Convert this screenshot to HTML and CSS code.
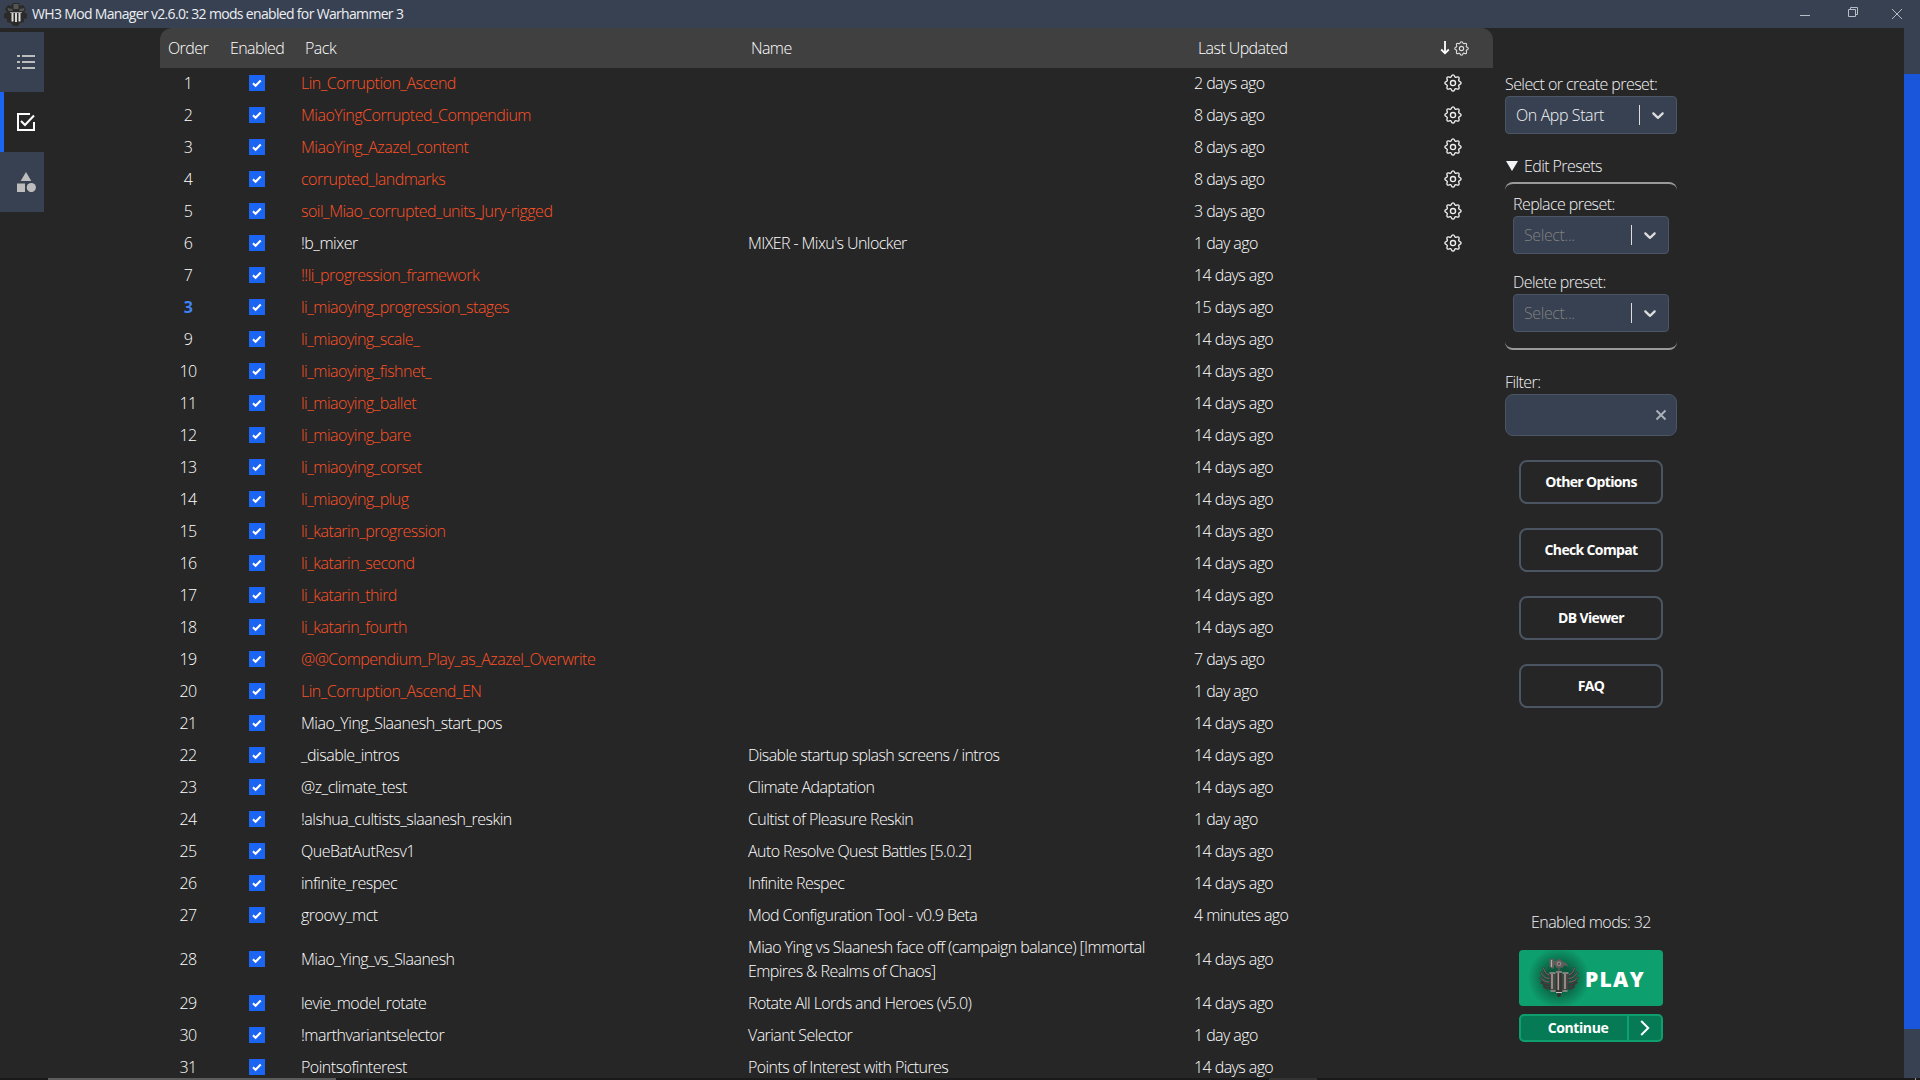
FILE: index.html
```html
<!DOCTYPE html>
<html lang="en">
<head>
<meta charset="utf-8">
<title>WH3 Mod Manager</title>
<link rel="stylesheet" href="styles.css">
</head>
<body>
<svg class="defs" aria-hidden="true">
  <symbol id="gear" viewBox="0 0 24 24"><path fill="none" stroke="currentColor" stroke-width="1.8" stroke-linejoin="round" d="M12 1.200C13.600 1.200 13.700 2.200 14.200 3.300C14.700 4.400 15.700 4.700 16.800 4.200C18 3.700 18.700 3.300 19.700 4.300C20.700 5.300 20.300 6 19.800 7.200C19.300 8.300 19.600 9.300 20.700 9.800C21.800 10.300 22.800 10.400 22.800 12C22.800 13.600 21.800 13.700 20.700 14.200C19.600 14.700 19.300 15.700 19.800 16.800C20.300 18 20.700 18.700 19.700 19.700C18.700 20.700 18 20.300 16.800 19.800C15.700 19.300 14.700 19.600 14.200 20.700C13.700 21.800 13.600 22.800 12 22.800C10.400 22.800 10.300 21.800 9.800 20.700C9.300 19.600 8.300 19.300 7.200 19.800C6 20.300 5.300 20.700 4.300 19.700C3.300 18.700 3.700 18 4.200 16.800C4.700 15.700 4.400 14.700 3.300 14.200C2.200 13.700 1.200 13.600 1.200 12C1.200 10.400 2.200 10.300 3.300 9.800C4.400 9.300 4.700 8.300 4.200 7.200C3.700 6 3.300 5.300 4.300 4.300C5.300 3.300 6 3.700 7.200 4.200C8.300 4.700 9.300 4.400 9.800 3.300C10.300 2.200 10.400 1.200 12 1.200z"/><circle cx="12" cy="12" r="3.400" fill="none" stroke="currentColor" stroke-width="1.800"/></symbol>
  <symbol id="tick" viewBox="0 0 16 16"><path d="M4 8.300l2.600 2.500 5.100-5.300" fill="none" stroke="#fff" stroke-width="2.100"/></symbol>
  <symbol id="chevron" viewBox="0 0 20 20"><path fill="currentColor" d="M4.516 7.548c.436-.446 1.043-.481 1.576 0L10 11.295l3.908-3.747c.533-.481 1.141-.446 1.574 0 .436.445.408 1.197 0 1.615-.406.418-4.695 4.502-4.695 4.502a1.095 1.095 0 0 1-1.576 0S4.924 9.581 4.516 9.163s-.436-1.170 0-1.615z"/></symbol>
  <symbol id="emblem" viewBox="0 0 40 40">
    <g fill="none" stroke="#3d3838" stroke-width="2.200" stroke-linecap="round"><path d="M11 18C7 17 5 13 4.500 10M11 21C6 21 4 18 2 15M11 24C6 25 3 22 1.500 20M11 27C7 28 4 26 2.500 24.500M11 30C8 31 6 30 5 28.500M29 18c4-1 6-5 6.500-8M29 21c5 0 7-3 9-6M29 24c5 1 8-2 9.500-4M29 27c4 1 7-1 8.500-2.500M29 30c3 1 5 0 6-1.500"/></g>
    <g fill="none" stroke="#8a8582" stroke-width=".7" stroke-linecap="round"><path d="M10 17C7 16 5 13 4.500 10M10 20.500C6 20.500 4 18 2 15M10 24C6 24 3 22 1.500 20M30 17c3-1 5-4 5.500-7M30 20.500c4 0 6-2.500 8-5.500M30 24c4 0 7-2 8.500-4"/></g>
    <path stroke="#555050" stroke-width="2.500" d="M20 9v6"/>
    <path fill="#4b4341" d="M10.500 14.500h6V34h-3l-2-2.500zM23.500 14.500h6l-1 17-2 2.500h-3z"/>
    <path fill="#3c3030" d="M17.200 13.500h5.600V35h-5.600z"/>
    <path stroke="#a39e9b" stroke-width="1.600" d="M13 16v15M19.300 15v17M26 16v15"/>
    <path stroke="#c4bfbb" stroke-width="1.200" d="M10.500 15h6M17 14h6M23.500 15h6M11.500 33h5M17 34.500h6M23.500 33h5"/>
    <circle cx="20" cy="37" r="2" fill="#38302f"/>
    <path fill="#625d5b" d="M10.500 1h4.500v2h2c1-2 4.500-2.500 6 0l1.500 1.200 2.500.5 2.500 4-4-1.500-2 2.500h-6l-2-3H15v3.500c-2.500 1-4-.5-4.500-2z"/>
    <path stroke="#b3aeaa" stroke-width="1.200" d="M12.500 2v7"/>
    <circle cx="20" cy="5.800" r="2.300" fill="#8f8a87"/><circle cx="20" cy="5.800" r=".9" fill="#333"/>
  </symbol>
</svg>
<div class="app">
  <header class="titlebar">
    <svg class="logo" viewBox="0 0 24 24"><path fill="#2b2a29" d="M9 1l6 0 1 3 3-1 3 4-2 3 3 2v4l-3 1 0 3-4 1-2 3h-5l-2-3-4-1 0-3-3-1v-4l3-2-2-3 3-4 3 1z"/><path fill="#555" d="M9.500 2h5v5h-5zM3.500 6l5 1v2h-4zM20.500 6l-5 1v2h4z"/><path stroke="#d8d8d8" stroke-width="2" d="M8.500 10.500v9M12 10.500v9.500M15.500 10.500v9"/><path stroke="#999" d="M6 10.500h12"/></svg>
    <span class="app-title">WH3 Mod Manager v2.6.0: 32 mods enabled for Warhammer 3</span>
    <div class="window-controls">
      <svg viewBox="0 0 12 12"><path d="M1 6.500h10"/></svg>
      <svg viewBox="0 0 12 12"><path d="M1.500 3.500h7v7h-7zM3.500 3.500v-2h7v7h-2"/></svg>
      <svg viewBox="0 0 12 12"><path d="M1 1l10 10M11 1L1 11"/></svg>
    </div>
  </header>
  <div class="body">
    <nav class="tabs">
      <a class="tab"><svg width="20" height="20" viewBox="0 0 20 20"><path fill="currentColor" d="M1 3h3v2H1zm0 6h3v2H1zm0 6h3v2H1zM6 3h13v2H6zm0 6h13v2H6zm0 6h13v2H6z"/></svg></a>
      <a class="tab active"><svg width="20" height="20" viewBox="0 0 20 20"><path fill="none" stroke="currentColor" stroke-width="2" d="M14 2H2v16h16v-8M5 9l4 4 9-9.500"/></svg></a>
      <a class="tab"><svg width="20" height="20" viewBox="0 0 20 20"><path fill="currentColor" d="M10 0l5.300 9H4.700zM1 11.500h8V20H1z"/><circle cx="15.300" cy="15.500" r="4.600" fill="currentColor"/></svg></a>
    </nav>
    <main class="mods">
      <div class="row head"><span>Order</span><span>Enabled</span><span>Pack</span><span>Name</span><span>Last Updated</span><span class="sort"><svg class="arrow" viewBox="0 0 10 14"><path d="M5 0v12M1.200 8.500L5 12.300l3.800-3.800" fill="none" stroke="currentColor" stroke-width="1.800"/></svg><svg class="gear"><use href="#gear"/></svg></span></div>
      <div class="row local"><span>1</span><i class="check"><svg><use href="#tick"/></svg></i><span>Lin_Corruption_Ascend</span><span></span><span>2 days ago</span><svg class="gear"><use href="#gear"/></svg></div>
      <div class="row local"><span>2</span><i class="check"><svg><use href="#tick"/></svg></i><span>MiaoYingCorrupted_Compendium</span><span></span><span>8 days ago</span><svg class="gear"><use href="#gear"/></svg></div>
      <div class="row local"><span>3</span><i class="check"><svg><use href="#tick"/></svg></i><span>MiaoYing_Azazel_content</span><span></span><span>8 days ago</span><svg class="gear"><use href="#gear"/></svg></div>
      <div class="row local"><span>4</span><i class="check"><svg><use href="#tick"/></svg></i><span>corrupted_landmarks</span><span></span><span>8 days ago</span><svg class="gear"><use href="#gear"/></svg></div>
      <div class="row local"><span>5</span><i class="check"><svg><use href="#tick"/></svg></i><span>soil_Miao_corrupted_units_Jury-rigged</span><span></span><span>3 days ago</span><svg class="gear"><use href="#gear"/></svg></div>
      <div class="row"><span>6</span><i class="check"><svg><use href="#tick"/></svg></i><span>!b_mixer</span><span>MIXER - Mixu's Unlocker</span><span>1 day ago</span><svg class="gear"><use href="#gear"/></svg></div>
      <div class="row local"><span>7</span><i class="check"><svg><use href="#tick"/></svg></i><span>!!li_progression_framework</span><span></span><span>14 days ago</span></div>
      <div class="row local pinned"><span>3</span><i class="check"><svg><use href="#tick"/></svg></i><span>li_miaoying_progression_stages</span><span></span><span>15 days ago</span></div>
      <div class="row local"><span>9</span><i class="check"><svg><use href="#tick"/></svg></i><span>li_miaoying_scale_</span><span></span><span>14 days ago</span></div>
      <div class="row local"><span>10</span><i class="check"><svg><use href="#tick"/></svg></i><span>li_miaoying_fishnet_</span><span></span><span>14 days ago</span></div>
      <div class="row local"><span>11</span><i class="check"><svg><use href="#tick"/></svg></i><span>li_miaoying_ballet</span><span></span><span>14 days ago</span></div>
      <div class="row local"><span>12</span><i class="check"><svg><use href="#tick"/></svg></i><span>li_miaoying_bare</span><span></span><span>14 days ago</span></div>
      <div class="row local"><span>13</span><i class="check"><svg><use href="#tick"/></svg></i><span>li_miaoying_corset</span><span></span><span>14 days ago</span></div>
      <div class="row local"><span>14</span><i class="check"><svg><use href="#tick"/></svg></i><span>li_miaoying_plug</span><span></span><span>14 days ago</span></div>
      <div class="row local"><span>15</span><i class="check"><svg><use href="#tick"/></svg></i><span>li_katarin_progression</span><span></span><span>14 days ago</span></div>
      <div class="row local"><span>16</span><i class="check"><svg><use href="#tick"/></svg></i><span>li_katarin_second</span><span></span><span>14 days ago</span></div>
      <div class="row local"><span>17</span><i class="check"><svg><use href="#tick"/></svg></i><span>li_katarin_third</span><span></span><span>14 days ago</span></div>
      <div class="row local"><span>18</span><i class="check"><svg><use href="#tick"/></svg></i><span>li_katarin_fourth</span><span></span><span>14 days ago</span></div>
      <div class="row local"><span>19</span><i class="check"><svg><use href="#tick"/></svg></i><span>@@Compendium_Play_as_Azazel_Overwrite</span><span></span><span>7 days ago</span></div>
      <div class="row local"><span>20</span><i class="check"><svg><use href="#tick"/></svg></i><span>Lin_Corruption_Ascend_EN</span><span></span><span>1 day ago</span></div>
      <div class="row"><span>21</span><i class="check"><svg><use href="#tick"/></svg></i><span>Miao_Ying_Slaanesh_start_pos</span><span></span><span>14 days ago</span></div>
      <div class="row"><span>22</span><i class="check"><svg><use href="#tick"/></svg></i><span>_disable_intros</span><span>Disable startup splash screens / intros</span><span>14 days ago</span></div>
      <div class="row"><span>23</span><i class="check"><svg><use href="#tick"/></svg></i><span>@z_climate_test</span><span>Climate Adaptation</span><span>14 days ago</span></div>
      <div class="row"><span>24</span><i class="check"><svg><use href="#tick"/></svg></i><span>!alshua_cultists_slaanesh_reskin</span><span>Cultist of Pleasure Reskin</span><span>1 day ago</span></div>
      <div class="row"><span>25</span><i class="check"><svg><use href="#tick"/></svg></i><span>QueBatAutResv1</span><span>Auto Resolve Quest Battles [5.0.2]</span><span>14 days ago</span></div>
      <div class="row"><span>26</span><i class="check"><svg><use href="#tick"/></svg></i><span>infinite_respec</span><span>Infinite Respec</span><span>14 days ago</span></div>
      <div class="row"><span>27</span><i class="check"><svg><use href="#tick"/></svg></i><span>groovy_mct</span><span>Mod Configuration Tool - v0.9 Beta</span><span>4 minutes ago</span></div>
      <div class="row"><span>28</span><i class="check"><svg><use href="#tick"/></svg></i><span>Miao_Ying_vs_Slaanesh</span><span>Miao Ying vs Slaanesh face off (campaign balance) [Immortal Empires &amp; Realms of Chaos]</span><span>14 days ago</span></div>
      <div class="row"><span>29</span><i class="check"><svg><use href="#tick"/></svg></i><span>levie_model_rotate</span><span>Rotate All Lords and Heroes (v5.0)</span><span>14 days ago</span></div>
      <div class="row"><span>30</span><i class="check"><svg><use href="#tick"/></svg></i><span>!marthvariantselector</span><span>Variant Selector</span><span>1 day ago</span></div>
      <div class="row"><span>31</span><i class="check"><svg><use href="#tick"/></svg></i><span>Pointsofinterest</span><span>Points of Interest with Pictures</span><span>14 days ago</span></div>
    </main>
    <aside class="sidebar">
      <label>Select or create preset:</label>
      <div class="select"><span>On App Start</span><b></b><svg><use href="#chevron"/></svg></div>
      <div class="summary"><i></i>Edit Presets</div>
      <div class="edit-panel">
        <label>Replace preset:</label>
        <div class="select empty"><span>Select...</span><b></b><svg><use href="#chevron"/></svg></div>
        <label class="second">Delete preset:</label>
        <div class="select empty"><span>Select...</span><b></b><svg><use href="#chevron"/></svg></div>
      </div>
      <label>Filter:</label>
      <div class="filter"><svg viewBox="0 0 12 12"><path d="M1.500 1.500l9 9M10.500 1.500l-9 9" stroke="currentColor" stroke-width="2"/></svg></div>
      <div class="actions">
        <button>Other Options</button>
        <button>Check Compat</button>
        <button>DB Viewer</button>
        <button>FAQ</button>
      </div>
      <div class="launch">
        <p>Enabled mods: 32</p>
        <button class="play"><svg><use href="#emblem"/></svg><span>PLAY</span></button>
        <button class="continue"><span>Continue</span><i><svg viewBox="0 0 10 16"><path d="M1.200 1l7 7-7 7" fill="none" stroke="#fff" stroke-width="2"/></svg></i></button>
      </div>
    </aside>
    <div class="scrollbar"><i></i></div>
  </div>
  <footer class="desk-edge"><i class="window"></i><i class="item"></i><i class="peek"></i></footer>
</div>
</body>
</html>
```
FILE: styles.css
```css
* { box-sizing: border-box; }
body {
  margin: 0;
  background: #262626;
  color: #fff;
  font: 330 16px/24px "Open Sans", "Noto Sans", sans-serif;
  letter-spacing: -0.58px;
  overflow: hidden;
}
.defs { display: none; }
.app { display: flex; flex-direction: column; height: 1080px; overflow: hidden; }

.titlebar { display: flex; align-items: center; height: 28px; flex: none; padding: 0 7px 0 4px; background: #374151; }
.logo { width: 24px; height: 24px; }
.app-title { margin-left: 4px; font-size: 14px; font-weight: 400; line-height: 28px; color: #eceef1; letter-spacing: -0.67px; }
.window-controls { display: flex; gap: 34px; margin-left: auto; padding-right: 10px; }
.window-controls svg { width: 12px; height: 12px; overflow: visible; fill: none; stroke: #b8bdc5; stroke-width: 1; }
.window-controls svg:nth-child(1) { margin: 1px -2px 0 0; }
.window-controls svg:nth-child(2) { margin: -2px -2px 0 4px; }

.body { display: flex; flex: 1; min-height: 0; }
.tabs { width: 160px; padding-top: 4px; flex: none; }
.tab { display: flex; align-items: center; width: 44px; height: 60px; padding-left: 16px; background: #374151; color: #bdbdbd; }
.tab.active { background: none; border-left: 4px solid #1c64f2; padding-left: 12px; color: #fff; }

.mods { width: 1333px; flex: none; overflow: hidden; }
.row {
  display: grid;
  grid-template-columns: 56px 82px 450px 446px 240px 1fr;
  align-items: center;
  min-height: 32px;
  padding: 3px 0 5px;
}
.row > :nth-child(1) { text-align: center; }
.row > :nth-child(2) { justify-self: center; }
.row > :nth-child(3) { padding-left: 3px; letter-spacing: -0.5px; }
.row > :nth-child(4) { padding-right: 28px; }
.row > .gear { justify-self: start; margin-left: 10px; }
.row.local > :nth-child(3) { color: #ff5226; }
.row.pinned > :nth-child(1) { color: #3f83f8; font-weight: 700; }
.row.head { height: 40px; padding: 4px 0; background: #404040; border-radius: 12px 12px 0 0; }
.row.head > :nth-child(3) { padding-left: 7px; }
.row.head > :nth-child(4) { padding-left: 3px; }
.row.head > :nth-child(5) { padding-left: 4px; }
.gear { width: 18px; height: 18px; color: #f0f0f0; }
.sort { display: flex; align-items: center; gap: 4px; padding-left: 6px; }
.sort .gear { width: 15px; height: 15px; color: #ddd; }
.arrow { width: 10px; height: 14px; }
.check { width: 16px; height: 16px; background: #1c64f2; }
.check svg { display: block; width: 16px; height: 16px; }

.sidebar { width: 172px; margin-left: 12px; padding-top: 44px; display: flex; flex-direction: column; color: #f3f4f6; }
label { display: block; }
.select {
  display: flex;
  align-items: center;
  height: 38px;
  padding: 0 8px 0 10px;
  border: 1px solid #4b5563;
  border-radius: 4px;
  background: #374151;
}
.select span { letter-spacing: -0.4px; }
.select b { width: 1px; height: 20px; margin-left: auto; background: #ddd; }
.select svg { width: 20px; height: 20px; margin-left: 8px; color: #ddd; }
.select.empty span { color: #808080; }
.summary { display: flex; align-items: center; margin-top: 19px; height: 26px; gap: 6px; }
.summary i { margin-left: 1px; border: 6px solid transparent; border-top: 10px solid #f3f4f6; border-bottom: 0; }
.edit-panel {
  height: 168px;
  margin: 3px 0 20px;
  padding: 8px 8px 0;
  border: 2px solid #9a9a9a;
  border-width: 2px 0;
  border-radius: 8px;
}
.edit-panel .second { margin-top: 16px; }
.filter {
  display: flex;
  align-items: center;
  justify-content: flex-end;
  height: 42px;
  padding-right: 9px;
  border: 1px solid #4b5563;
  border-radius: 8px;
  background: #374151;
  color: #a9b0ba;
}
.filter svg { width: 12px; height: 12px; }
button { font-family: inherit; color: #fff; margin: 0; padding: 0; }
.actions { display: flex; flex-direction: column; gap: 24px; margin: 24px 14px 0; }
.actions button {
  height: 44px;
  padding-bottom: 2px;
  border: 2px solid #4b5563;
  border-radius: 8px;
  background: none;
  font-size: 14px;
  font-weight: 700;
  letter-spacing: -0.65px;
}
.launch { margin: auto 14px 36px; }
.launch p { margin: 0 0 16px; text-align: center; }
.play {
  display: flex;
  align-items: center;
  width: 144px;
  height: 56px;
  padding-left: 20px;
  border: 0;
  border-radius: 4px;
  background: radial-gradient(circle at 40px 28px, #0a5a40 0 12px, #0c7954 20px, #0e9f6e 31px);
}
.play svg { width: 40px; height: 40px; }
.play span { margin: 2px 0 0 6px; font-size: 21px; font-weight: 800; letter-spacing: 1.300px; }
.continue {
  display: flex;
  width: 144px;
  height: 28px;
  margin-top: 8px;
  border: 2px solid #0e9f6e;
  border-radius: 5px;
  background: #057a55;
  font-size: 14px;
  font-weight: 700;
  line-height: 24px;
  letter-spacing: -0.4px;
}
.continue span { width: 106px; padding-left: 8px; }
.continue i { display: flex; align-items: center; justify-content: center; flex: 1; border-left: 2px solid #0e9f6e; }
.continue svg { width: 10px; height: 16px; }

.scrollbar { width: 16px; margin-left: auto; padding-top: 46px; background: #374151; }
.scrollbar i { display: block; height: 955px; background: #1a56db; }

.desk-edge { display: flex; height: 2px; flex: none; background: #1b1a1a; }
.desk-edge i { height: 2px; }
.desk-edge .window { width: 288px; margin-left: 48px; background: #5c5c5c; }
.desk-edge .item { width: 48px; margin-left: 933px; background: #333; }
.desk-edge .peek { width: 1px; margin: 0 4px 0 auto; background: #999; }
```
